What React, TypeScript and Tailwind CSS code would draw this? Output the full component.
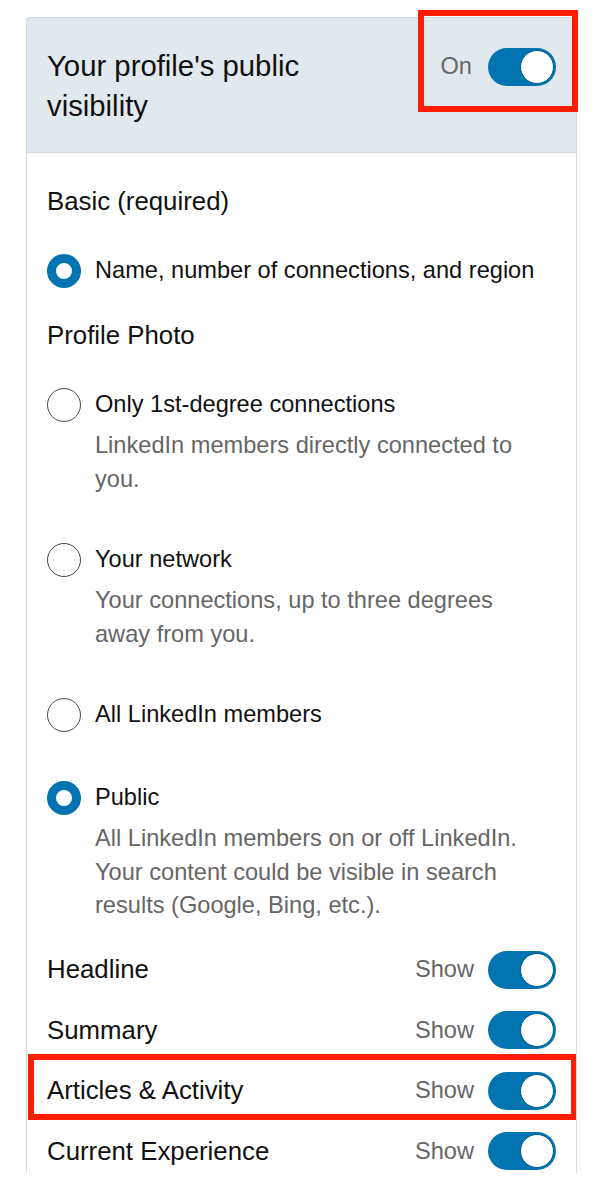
import React from "react";

function Toggle() {
  return (
    <div className="flex h-[38px] w-[68px] items-center rounded-full bg-[#0073b1] p-[2px]">
      <div className="ml-auto h-[34px] w-[34px] rounded-full border-[1.5px] border-[#005a8c] bg-white" />
    </div>
  );
}

function Radio({ checked }: { checked?: boolean }) {
  return checked ? (
    <div className="h-[34px] w-[34px] shrink-0 rounded-full border-[9px] border-[#0073b1] bg-white" />
  ) : (
    <div className="h-[34px] w-[34px] shrink-0 rounded-full border border-[#4a4a4a] bg-white" />
  );
}

function Option({
  label,
  desc,
  checked,
  className,
}: {
  label: string;
  desc?: string[];
  checked?: boolean;
  className?: string;
}) {
  return (
    <div className={className}>
      <div className="flex h-[34px] items-center gap-[14px]">
        <Radio checked={checked} />
        <span className="text-[#111111]">{label}</span>
      </div>
      {desc && (
        <div className="mt-[7px] pl-[48px] leading-[33.5px] text-[#666666]">
          {desc.map((d) => (
            <div key={d}>{d}</div>
          ))}
        </div>
      )}
    </div>
  );
}

function ShowRow({ label, boxed }: { label: string; boxed?: boolean }) {
  return (
    <div className="relative flex h-[60.5px] items-center justify-between">
      <span className="text-[25.8px] text-[#111111]">{label}</span>
      <div className="flex items-center gap-[14px]">
        <span className="text-[#666666]">Show</span>
        <Toggle />
      </div>
      {boxed && (
        <div className="pointer-events-none absolute -left-[19px] -right-[21px] top-[-7px] bottom-[1px] border-[6px] border-[#ff1e00]" />
      )}
    </div>
  );
}

export default function App() {
  return (
    <div
      className="min-h-[1183px] bg-white pt-[17px] pl-[26px] text-[23.6px]"
      style={{ fontFamily: '"Liberation Sans", Arial, sans-serif', width: 600 }}
    >
      <div className="w-[551px]">
        {/* header */}
        <div className="relative flex items-start justify-between rounded-t-[3px] border border-[#d3d9de] bg-[#e1e9ee] pt-[28px] pb-[26px] pl-[20px] pr-[20px]">
          <h1 className="w-[310px] text-[29.3px] leading-[40px] text-[#111111]">
            Your profile's public visibility
          </h1>
          <div className="relative mt-[2px] flex items-center gap-[16px]">
            <span className="text-[#666666]">On</span>
            <Toggle />
            <div className="pointer-events-none absolute -left-[23px] -right-[22px] -top-[38px] -bottom-[26px] border-[6px] border-[#ff1e00]" />
          </div>
        </div>

        {/* body */}
        <div className="h-[1020px] overflow-hidden border-x border-[#d8dde1] bg-white px-[20px] pt-[32px]">
          <div className="text-[25.8px] leading-[32px] text-[#111111]">Basic (required)</div>
          <Option className="mt-[37px]" checked label="Name, number of connections, and region" />
          <div className="mt-[31px] text-[25.8px] leading-[32px] text-[#111111]">Profile Photo</div>
          <Option
            className="mt-[37px]"
            label="Only 1st-degree connections"
            desc={["LinkedIn members directly connected to", "you."]}
          />
          <Option
            className="mt-[47px]"
            label="Your network"
            desc={["Your connections, up to three degrees", "away from you."]}
          />
          <Option className="mt-[47px]" label="All LinkedIn members" />
          <Option
            className="mt-[49px]"
            checked
            label="Public"
            desc={[
              "All LinkedIn members on or off LinkedIn.",
              "Your content could be visible in search",
              "results (Google, Bing, etc.).",
            ]}
          />
          <div className="mt-[17px]">
            <ShowRow label="Headline" />
            <ShowRow label="Summary" />
            <ShowRow label="Articles & Activity" boxed />
            <ShowRow label="Current Experience" />
          </div>
        </div>
      </div>
    </div>
  );
}
